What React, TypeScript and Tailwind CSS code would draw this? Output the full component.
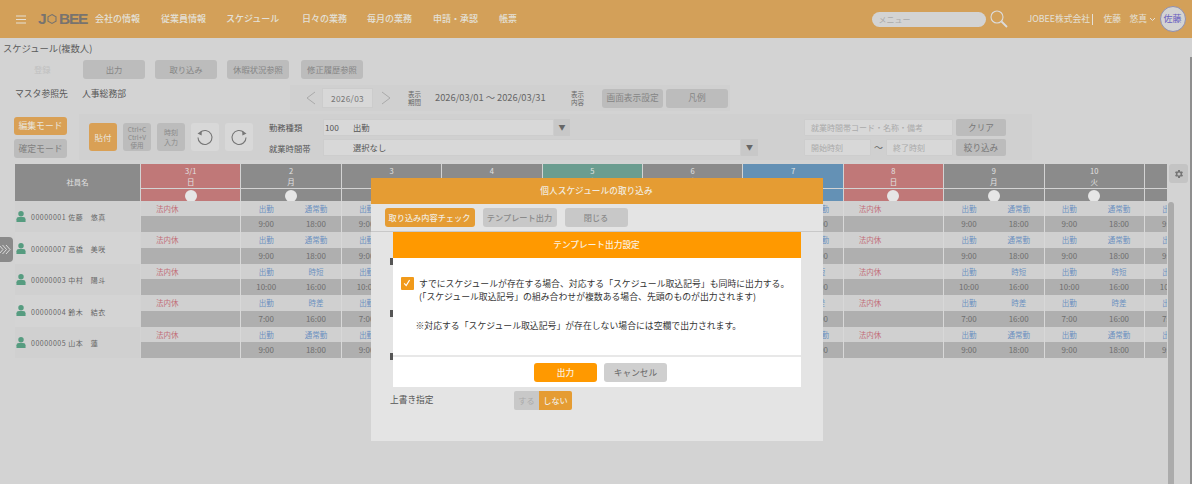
import React from "react";

const font = { fontFamily: '"Noto Sans CJK JP", "Noto Sans", sans-serif' };
const nav = ["会社の情報", "従業員情報", "スケジュール", "日々の業務", "毎月の業務", "申請・承認", "帳票"];
const navW = ["w-[66px]", "w-[65px]", "w-[76px]", "w-[65px]", "w-[66px]", "w-[66px]", "w-[20px]"];
const days = [
  { d: "3/1", w: "日", c: "bg-[#c07878]", off: true },
  { d: "2", w: "月", c: "bg-[#8b8b8b]" },
  { d: "3", w: "火", c: "bg-[#8b8b8b]" },
  { d: "4", w: "水", c: "bg-[#8b8b8b]" },
  { d: "5", w: "木", c: "bg-[#6b9d90]" },
  { d: "6", w: "金", c: "bg-[#8b8b8b]" },
  { d: "7", w: "土", c: "bg-[#6491b5]" },
  { d: "8", w: "日", c: "bg-[#c07878]", off: true },
  { d: "9", w: "月", c: "bg-[#8b8b8b]" },
  { d: "10", w: "火", c: "bg-[#8b8b8b]" },
  { d: "11", w: "水", c: "bg-[#8b8b8b]" },
];
const people = [
  { n: "00000001 佐藤　悠真", t: "通常勤", s: "9:00", e: "18:00", bg: "bg-[#d0d0d0]" },
  { n: "00000007 高橋　美咲", t: "通常勤", s: "9:00", e: "18:00", bg: "bg-[#d4d4d4]" },
  { n: "00000003 中村　陽斗", t: "時短", s: "10:00", e: "16:00", bg: "bg-[#d0d0d0]" },
  { n: "00000004 鈴木　結衣", t: "時差", s: "7:00", e: "16:00", bg: "bg-[#d4d4d4]" },
  { n: "00000005 山本　蓮", t: "通常勤", s: "9:00", e: "18:00", bg: "bg-[#d0d0d0]" },
];

function GrayBtn({ children }: { children: React.ReactNode }) {
  return (
    <div className="w-[62px] h-[19px] shrink-0 rounded-[3px] bg-[#bcbcbc] flex items-center justify-center text-[8.3px] text-[#858585] whitespace-nowrap">
      {children}
    </div>
  );
}

function Person() {
  return (
    <svg width="10" height="11" viewBox="0 0 11 12" className="shrink-0">
      <circle cx="5.5" cy="3" r="3" fill="#569c80" />
      <path d="M0.5 12 V9 Q0.5 6.5 3.2 6.5 H7.8 Q10.5 6.5 10.5 9 V12 Z" fill="#569c80" />
    </svg>
  );
}

function Undo({ flip }: { flip?: boolean }) {
  return (
    <div className="w-[28px] h-[28px] rounded-[3px] bg-[#d8d8d8] flex items-center justify-center shrink-0">
      <svg width="18" height="18" viewBox="0 0 18 18" fill="none" className={flip ? "-scale-x-100" : ""}>
        <path d="M4 4.6 A7 7 0 1 1 2 9.4" stroke="#767676" strokeWidth="1.1" />
        <path d="M1.5 5.5 L5.8 2.8 L5.6 7.6 Z" fill="#767676" />
      </svg>
    </div>
  );
}

export default function App() {
  return (
    <div style={font} className="relative w-[1192px] h-[484px] overflow-hidden bg-[#d3d3d3] text-[#555]">
      {/* top bar */}
      <div className="h-[38px] bg-[#d3a059] flex items-center">
        <svg width="10" height="9" viewBox="0 0 10 9" className="ml-[16px] shrink-0">
          <path d="M0 1h10M0 4.5h10M0 8h10" stroke="#e6e0d4" strokeWidth="1.2" />
        </svg>
        <div className="ml-[12px] w-[49px] flex items-center text-[#77736f] font-bold text-[15.5px] leading-none tracking-[-1.2px] shrink-0" style={{ fontFamily: '"Liberation Sans", sans-serif' }}>
          <span>J</span>
          <svg width="10" height="12" viewBox="0 0 10 12" className="shrink-0 ml-[2px] mr-[1.5px]">
            <path d="M5 1.6 L9 3.8 V8.2 L5 10.4 L1 8.2 V3.8 Z" fill="none" stroke="#77736f" strokeWidth="1.1" />
          </svg>
          <span>BEE</span>
        </div>
        <div className="ml-[8px] flex">
          {nav.map((n, i) => (
            <span key={n} className={`${navW[i]} shrink-0 text-[9px] text-[#e4e0d8] whitespace-nowrap font-medium`}>{n}</span>
          ))}
        </div>
        <div className="ml-auto flex items-center mr-[6.5px]">
          <div className="w-[114px] h-[15px] rounded-full bg-[#d3d3d3] pl-[7px] text-[8px] leading-[15px] text-[#aaa]">メニュー</div>
          <svg width="18" height="18" viewBox="0 0 18 18" fill="none" className="ml-[4.5px]">
            <circle cx="7" cy="7" r="6" stroke="#dcdcdc" strokeWidth="1.1" />
            <path d="M11.5 11.5 L17 17" stroke="#dcdcdc" strokeWidth="1.8" />
          </svg>
          <span className="ml-[19.5px] w-[62px] text-[8.8px] text-[#e4e0d8] whitespace-nowrap">JOBEE株式会社</span>
          <span className="ml-[2px] w-px h-[11px] bg-[#e4e0d8]" />
          <span className="ml-[11px] w-[18px] text-[8.8px] text-[#e4e0d8] whitespace-nowrap">佐藤</span>
          <span className="ml-[8px] w-[18px] text-[8.8px] text-[#e4e0d8] whitespace-nowrap">悠真</span>
          <svg width="7" height="5" viewBox="0 0 7 5" fill="none" className="ml-[1px]">
            <path d="M1 1 L3.5 3.5 L6 1" stroke="#e4e0d8" />
          </svg>
          <div className="ml-[4px] w-[26px] h-[26px] rounded-full bg-[#d3d3d3] border border-[#8f8fb0] flex items-center justify-center text-[9px] text-[#6a5fc0] whitespace-nowrap">佐藤</div>
        </div>
      </div>

      {/* title */}
      <div className="pl-[3px] pt-[3px] h-[19px] text-[9.3px] leading-[15px] text-[#5a5a5a]">スケジュール(複数人)</div>

      {/* action row */}
      <div className="flex items-center h-[21px] mt-[2px]">
        <span className="ml-[34px] w-[49px] text-[8.3px] text-[#c0c0c0]">登録</span>
        <GrayBtn>出力</GrayBtn>
        <span className="w-[10px]" />
        <GrayBtn>取り込み</GrayBtn>
        <span className="w-[10px]" />
        <GrayBtn>休暇状況参照</GrayBtn>
        <span className="w-[12px]" />
        <GrayBtn>修正履歴参照</GrayBtn>
      </div>

      {/* master / period row */}
      <div className="flex mt-[5px] h-[28px]">
        <span className="ml-[15px] w-[67px] text-[8.8px] leading-[17px] text-[#555] whitespace-nowrap">マスタ参照先</span>
        <span className="w-[208px] text-[8.8px] leading-[17px] text-[#555]">人事総務部</span>
        <div className="w-[440px] h-[26px] bg-[#d0d0d0] flex items-center">
          <svg width="10" height="14" viewBox="0 0 10 14" fill="none" className="ml-[16px]"><path d="M9 1 L1 7 L9 13" stroke="#aaa" /></svg>
          <div className="ml-[6px] w-[51px] h-[20px] bg-[#d8d8d8] border border-[#ccc] flex items-center justify-center text-[8.3px] tracking-[0.3px] text-[#777]">2026/03</div>
          <svg width="10" height="14" viewBox="0 0 10 14" fill="none" className="ml-[8px]"><path d="M1 1 L9 7 L1 13" stroke="#aaa" /></svg>
          <div className="ml-[16px] w-[15px] text-[6.5px] leading-[8px] text-center text-[#666]">表示<br />期間</div>
          <span className="ml-[13px] w-[112px] text-[9.3px] whitespace-nowrap text-[#666]">2026/03/01 ～ 2026/03/31</span>
          <div className="ml-[23px] w-[15px] text-[6.5px] leading-[8px] text-center text-[#666]">表示<br />内容</div>
          <div className="ml-[17px] w-[61px] h-[19px] rounded-[3px] bg-[#bcbcbc] flex items-center justify-center text-[8.7px] text-[#858585] whitespace-nowrap">画面表示設定</div>
          <div className="ml-[3px] w-[62px] h-[19px] rounded-[3px] bg-[#bcbcbc] flex items-center justify-center text-[8.7px] text-[#858585]">凡例</div>
        </div>
      </div>

      {/* tool row */}
      <div className="flex mt-[1px] h-[46px]">
        <div className="ml-[14px] w-[53px] flex flex-col gap-[4px] pt-[3px] shrink-0">
          <div className="h-[18px] rounded-[3px] bg-[#d9a055] flex items-center justify-center text-[8.8px] text-[#e9e5dc] whitespace-nowrap">編集モード</div>
          <div className="h-[19px] rounded-[3px] bg-[#bcbcbc] flex items-center justify-center text-[8.8px] text-[#7f7f7f] whitespace-nowrap">確定モード</div>
        </div>
        <div className="ml-[12px] w-[953px] h-[46px] bg-[#d0d0d0] flex items-center">
          <div className="ml-[10px] w-[28px] h-[28px] rounded-[3px] bg-[#d9a055] flex items-center justify-center text-[8.5px] text-[#e9e5dc] shrink-0">貼付</div>
          <div className="ml-[6px] w-[28px] h-[28px] rounded-[3px] bg-[#bcbcbc] flex flex-col items-center justify-center text-[6.5px] leading-[8px] text-[#8a8a8a] shrink-0">
            <span>Ctrl+C</span><span>Ctrl+V</span><span>使用</span>
          </div>
          <div className="ml-[6px] w-[28px] h-[28px] rounded-[3px] bg-[#bcbcbc] flex flex-col items-center justify-center text-[7px] leading-[10px] text-[#8a8a8a] shrink-0">
            <span>時刻</span><span>入力</span>
          </div>
          <div className="ml-[6px]"><Undo /></div>
          <div className="ml-[6px]"><Undo flip /></div>
          <div className="ml-[16px] w-[54px] flex flex-col gap-[9px] text-[8.3px] leading-[12px] text-[#555] shrink-0">
            <span>勤務種類</span><span>就業時間帯</span>
          </div>
          <div className="w-[435px] shrink-0 flex flex-col gap-[3px]">
            <div className="flex h-[17px]">
              <div className="w-[231px] bg-[#d8d8d8] border border-[#cdcdcd] flex items-center text-[8.3px] pl-[1px] text-[#555]">
                <span className="w-[28px]">100</span><span>出勤</span>
              </div>
              <div className="w-[16px] bg-[#c8c8c8] flex items-center justify-center text-[7px] text-[#666]">▼</div>
            </div>
            <div className="flex h-[17px]">
              <div className="w-[418px] bg-[#d8d8d8] border border-[#cdcdcd] flex items-center text-[8.3px] pl-[29px] text-[#555]">選択なし</div>
              <div className="w-[17px] bg-[#c8c8c8] flex items-center justify-center text-[7px] text-[#666]">▼</div>
            </div>
          </div>
          <div className="ml-[46px] flex flex-col gap-[3px] shrink-0">
            <div className="flex gap-[3px] h-[17px]">
              <div className="w-[149px] bg-[#d8d8d8] border border-[#cdcdcd] rounded-[1px] pl-[6px] text-[8px] leading-[15px] text-[#aaa] whitespace-nowrap">就業時間帯コード・名称・備考</div>
              <div className="w-[50px] rounded-[2px] bg-[#bcbcbc] flex items-center justify-center text-[8.6px] text-[#777]">クリア</div>
            </div>
            <div className="flex h-[17px]">
              <div className="w-[67px] bg-[#d8d8d8] border border-[#cdcdcd] rounded-[1px] pl-[6px] text-[8px] leading-[15px] text-[#aaa]">開始時刻</div>
              <span className="w-[15px] text-center text-[9px] leading-[17px] text-[#666]">～</span>
              <div className="w-[67px] bg-[#d8d8d8] border border-[#cdcdcd] rounded-[1px] pl-[6px] text-[8px] leading-[15px] text-[#aaa]">終了時刻</div>
              <div className="ml-[3px] w-[50px] rounded-[2px] bg-[#bcbcbc] flex items-center justify-center text-[8.6px] text-[#777] whitespace-nowrap">絞り込み</div>
            </div>
          </div>
        </div>
      </div>

      {/* table */}
      <div className="ml-[15px] mt-[4px] w-[1152px] overflow-hidden">
        <div className="flex h-[37px] w-max">
          <div className="w-[125px] mr-px bg-[#8b8b8b] flex items-center justify-center text-[7.3px] text-[#e2e2e2] shrink-0">社員名</div>
          {days.map((d) => (
            <div key={d.d} className={`w-[100.4px] shrink-0 border-r border-[#d3d3d3] ${d.c} flex flex-col`}>
              <div className="h-[24px] flex flex-col items-center text-[7.5px] leading-[10.5px] pt-[2px] text-[#e2e2e2]">
                <span>{d.d}</span><span>{d.w}</span>
              </div>
              <div className="h-[13px] border-t border-[#d3d3d3] flex justify-center overflow-hidden">
                <span className="w-[12px] h-[12px] mt-[0.5px] rounded-full bg-[#e6e6e6] shrink-0" />
              </div>
            </div>
          ))}
        </div>
        {people.map((p) => (
          <div key={p.n} className="flex h-[31.4px] w-max">
            <div className={`w-[125px] mr-px ${p.bg} flex items-center pl-[1px] gap-[5px] text-[7px] tracking-[0.5px] text-[#666] whitespace-nowrap shrink-0`}>
              <Person />
              <span className="pt-[2px]">{p.n}</span>
            </div>
            {days.map((d) => (
              <div key={d.d} className="w-[100.4px] shrink-0 border-r border-[#d8d8d8] flex flex-col">
                <div className="h-[15.4px] bg-[#d0d0d0] flex items-center text-[7.5px]">
                  {d.off ? (
                    <span className="ml-[15px] text-[#c26e78]">法内休</span>
                  ) : (
                    <>
                      <span className="w-[50px] text-center text-[#6c90c0]">出勤</span>
                      <span className="w-[50px] text-center text-[#6c90c0]">{p.t}</span>
                    </>
                  )}
                </div>
                <div className="h-[16px] bg-[#afafaf] flex items-center text-[8px] text-[#6e6e6e]">
                  {!d.off && (
                    <>
                      <span className="w-[50px] text-center">{p.s}</span>
                      <span className="w-[50px] text-center">{p.e}</span>
                    </>
                  )}
                </div>
              </div>
            ))}
          </div>
        ))}
      </div>

      {/* overlays */}
      <div className="absolute left-0 top-[237px] w-[13px] h-[25px] rounded-r-[4px] bg-[#8a8a8a] flex items-center">
        <svg width="11" height="11" viewBox="0 0 11 11" fill="none" stroke="#e4e4e4" strokeWidth="0.9">
          <path d="M-1 1 L3 5.5 L-1 10" />
          <path d="M2.5 1 L6.5 5.5 L2.5 10" />
          <path d="M6 1 L10 5.5 L6 10" />
        </svg>
      </div>
      <div className="absolute left-[1169px] top-[164px] w-[19px] h-[19px] rounded-[3px] bg-[#c4c4c4] flex items-center justify-center">
        <svg width="12" height="12" viewBox="0 0 26 24" fill="#757575">
          <path d="M19.4 13a7.5 7.5 0 0 0 0-2l2.1-1.6-2-3.4-2.5 1a7.5 7.5 0 0 0-1.7-1L15 3.3h-4l-.4 2.7a7.5 7.5 0 0 0-1.7 1l-2.5-1-2 3.4L6.6 11a7.5 7.5 0 0 0 0 2l-2.1 1.6 2 3.4 2.5-1a7.5 7.5 0 0 0 1.7 1l.4 2.7h4l.4-2.7a7.5 7.5 0 0 0 1.7-1l2.5 1 2-3.4ZM13 15.5a3.5 3.5 0 1 1 0-7 3.5 3.5 0 0 1 0 7Z" />
        </svg>
      </div>
      <div className="absolute left-[1168px] top-[202px] w-[5.5px] h-[282px] rounded-t-[3px] bg-[#ababab]" />
      <div className="absolute left-[1190px] top-[57px] w-[2px] h-[427px] bg-[#8f8f8f]" />

      {/* outer modal */}
      <div className="absolute left-[370.5px] top-[178px] w-[452px] h-[263px] bg-[#e4e4e4] flex flex-col">
        <div className="h-[26px] bg-[#e59c33] flex items-center justify-center text-[8.7px] font-medium text-[#f1eadf]">個人スケジュールの取り込み</div>
        <div className="h-[28px] border-b border-[#c8c8c8] flex items-center pl-[14px]">
          <div className="w-[90px] h-[19px] rounded-[3px] bg-[#e59c33] flex items-center justify-center text-[8.2px] font-medium text-[#f1eadf] whitespace-nowrap">取り込み内容チェック</div>
          <div className="ml-[8px] w-[74px] h-[19px] rounded-[3px] bg-[#c8c8c8] flex items-center justify-center text-[8.2px] font-medium text-[#8a8a8a] whitespace-nowrap">テンプレート出力</div>
          <div className="ml-[8px] w-[63px] h-[19px] rounded-[3px] bg-[#c8c8c8] flex items-center justify-center text-[8.2px] font-medium text-[#8a8a8a]">閉じる</div>
        </div>
        <div className="mt-[159px] ml-[19.5px] h-[18px] flex items-center">
          <span className="w-[124px] text-[8.7px] text-[#555]">上書き指定</span>
          <div className="w-[25px] h-[19px] rounded-l-[2px] bg-[#c8c8c8] flex items-center justify-center text-[8.2px] text-[#aaa]">する</div>
          <div className="w-[33px] h-[19px] rounded-r-[2px] bg-[#e59c33] flex items-center justify-center text-[8.2px] font-medium text-[#f1eadf]">しない</div>
        </div>
      </div>

      {/* cut-off labels beside inner dialog */}
      <span className="absolute left-[390px] top-[258px] w-[2.5px] h-[7px] bg-[#555]" />
      <span className="absolute left-[390px] top-[310px] w-[2.5px] h-[7px] bg-[#555]" />
      <span className="absolute left-[390px] top-[353px] w-[2.5px] h-[7px] bg-[#555]" />

      {/* inner modal */}
      <div className="absolute left-[392.5px] top-[232px] w-[408px] h-[155px] bg-white flex flex-col">
        <div className="h-[26px] bg-[#ff9900] flex items-center justify-center text-[8.7px] font-medium text-[#fbf1e0]">テンプレート出力設定</div>
        <div className="h-[99px] flex flex-col border-b-2 border-[#e8e8e8]">
          <div className="flex pl-[8.5px] pt-[19px]">
            <div className="w-[12.5px] h-[12.5px] rounded-[1px] bg-[#f19a1a] flex items-center justify-center shrink-0">
              <svg width="8" height="8" viewBox="0 0 8 8" fill="none"><path d="M1.2 4.4 L3.2 6.6 L6.6 1" stroke="#fff" strokeWidth="1.2" /></svg>
            </div>
            <div className="ml-[5.5px] text-[8.85px] leading-[13px] text-[#333] whitespace-nowrap">
              すでにスケジュールが存在する場合、対応する「スケジュール取込記号」も同時に出力する。<br />
              (「スケジュール取込記号」の組み合わせが複数ある場合、先頭のものが出力されます)
            </div>
          </div>
          <div className="ml-[23px] mt-[16px] text-[8.85px] leading-[13px] text-[#333] whitespace-nowrap">※対応する「スケジュール取込記号」が存在しない場合には空欄で出力されます。</div>
        </div>
        <div className="flex-1 flex items-start pl-[141.5px] gap-[7px] pt-[6px]">
          <div className="w-[63px] h-[19px] rounded-[3px] bg-[#ff9900] flex items-center justify-center text-[8.7px] font-medium text-[#fbf1e0]">出力</div>
          <div className="w-[63px] h-[19px] rounded-[3px] bg-[#cfcfcf] flex items-center justify-center text-[8.7px] text-[#666]">キャンセル</div>
        </div>
      </div>
    </div>
  );
}
